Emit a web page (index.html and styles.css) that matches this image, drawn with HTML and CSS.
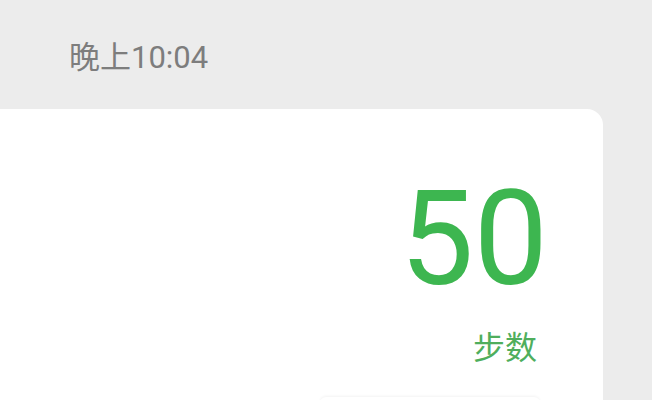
FILE: index.html
```html
<!DOCTYPE html>
<html lang="zh-CN">
<head>
<meta charset="utf-8">
<link rel="stylesheet" href="styles.css">
</head>
<body>
<div class="page">
  <header class="status">
    <span class="time">晚上10:04</span>
  </header>
  <section class="card">
    <div class="steps">50</div>
    <div class="label">步数</div>
    <div class="next"></div>
  </section>
</div>
</body>
</html>
```
FILE: styles.css
```css
html, body {
  margin: 0;
  padding: 0;
  background: #ececec;
  overflow: hidden;
}
.page {
  width: 652px;
  height: 400px;
  display: flex;
  flex-direction: column;
  overflow: hidden;
  font-family: Roboto, "Noto Sans CJK SC", sans-serif;
}
.status {
  flex-shrink: 0;
  height: 109px;
  box-sizing: border-box;
  padding: 42px 0 0 69px;
}
.time {
  display: block;
  font-size: 31px;
  line-height: 1;
  color: #7d7d7d;
}
.card {
  flex: 1 0 auto;
  margin: 0 49px 0 -30px;
  background: #ffffff;
  border-radius: 16px 16px 0 0;
  display: flex;
  flex-direction: column;
  align-items: flex-end;
  padding: 64px 58px 0 0;
  box-sizing: border-box;
}
.steps {
  font-size: 132px;
  line-height: 1;
  color: #3db650;
  margin-right: -3px;
}
.label {
  margin-top: 24px;
  margin-right: 8px;
  font-family: "Noto Sans CJK SC", sans-serif;
  font-size: 32px;
  line-height: 1;
  color: #4fae5c;
}
.next {
  align-self: flex-start;
  margin: 36px 0 0 350px;
  width: 220px;
  height: 20px;
  border-radius: 6px;
  background: #ffffff;
  box-shadow: 0 -1px 3px rgba(0, 0, 0, 0.05);
}
```
